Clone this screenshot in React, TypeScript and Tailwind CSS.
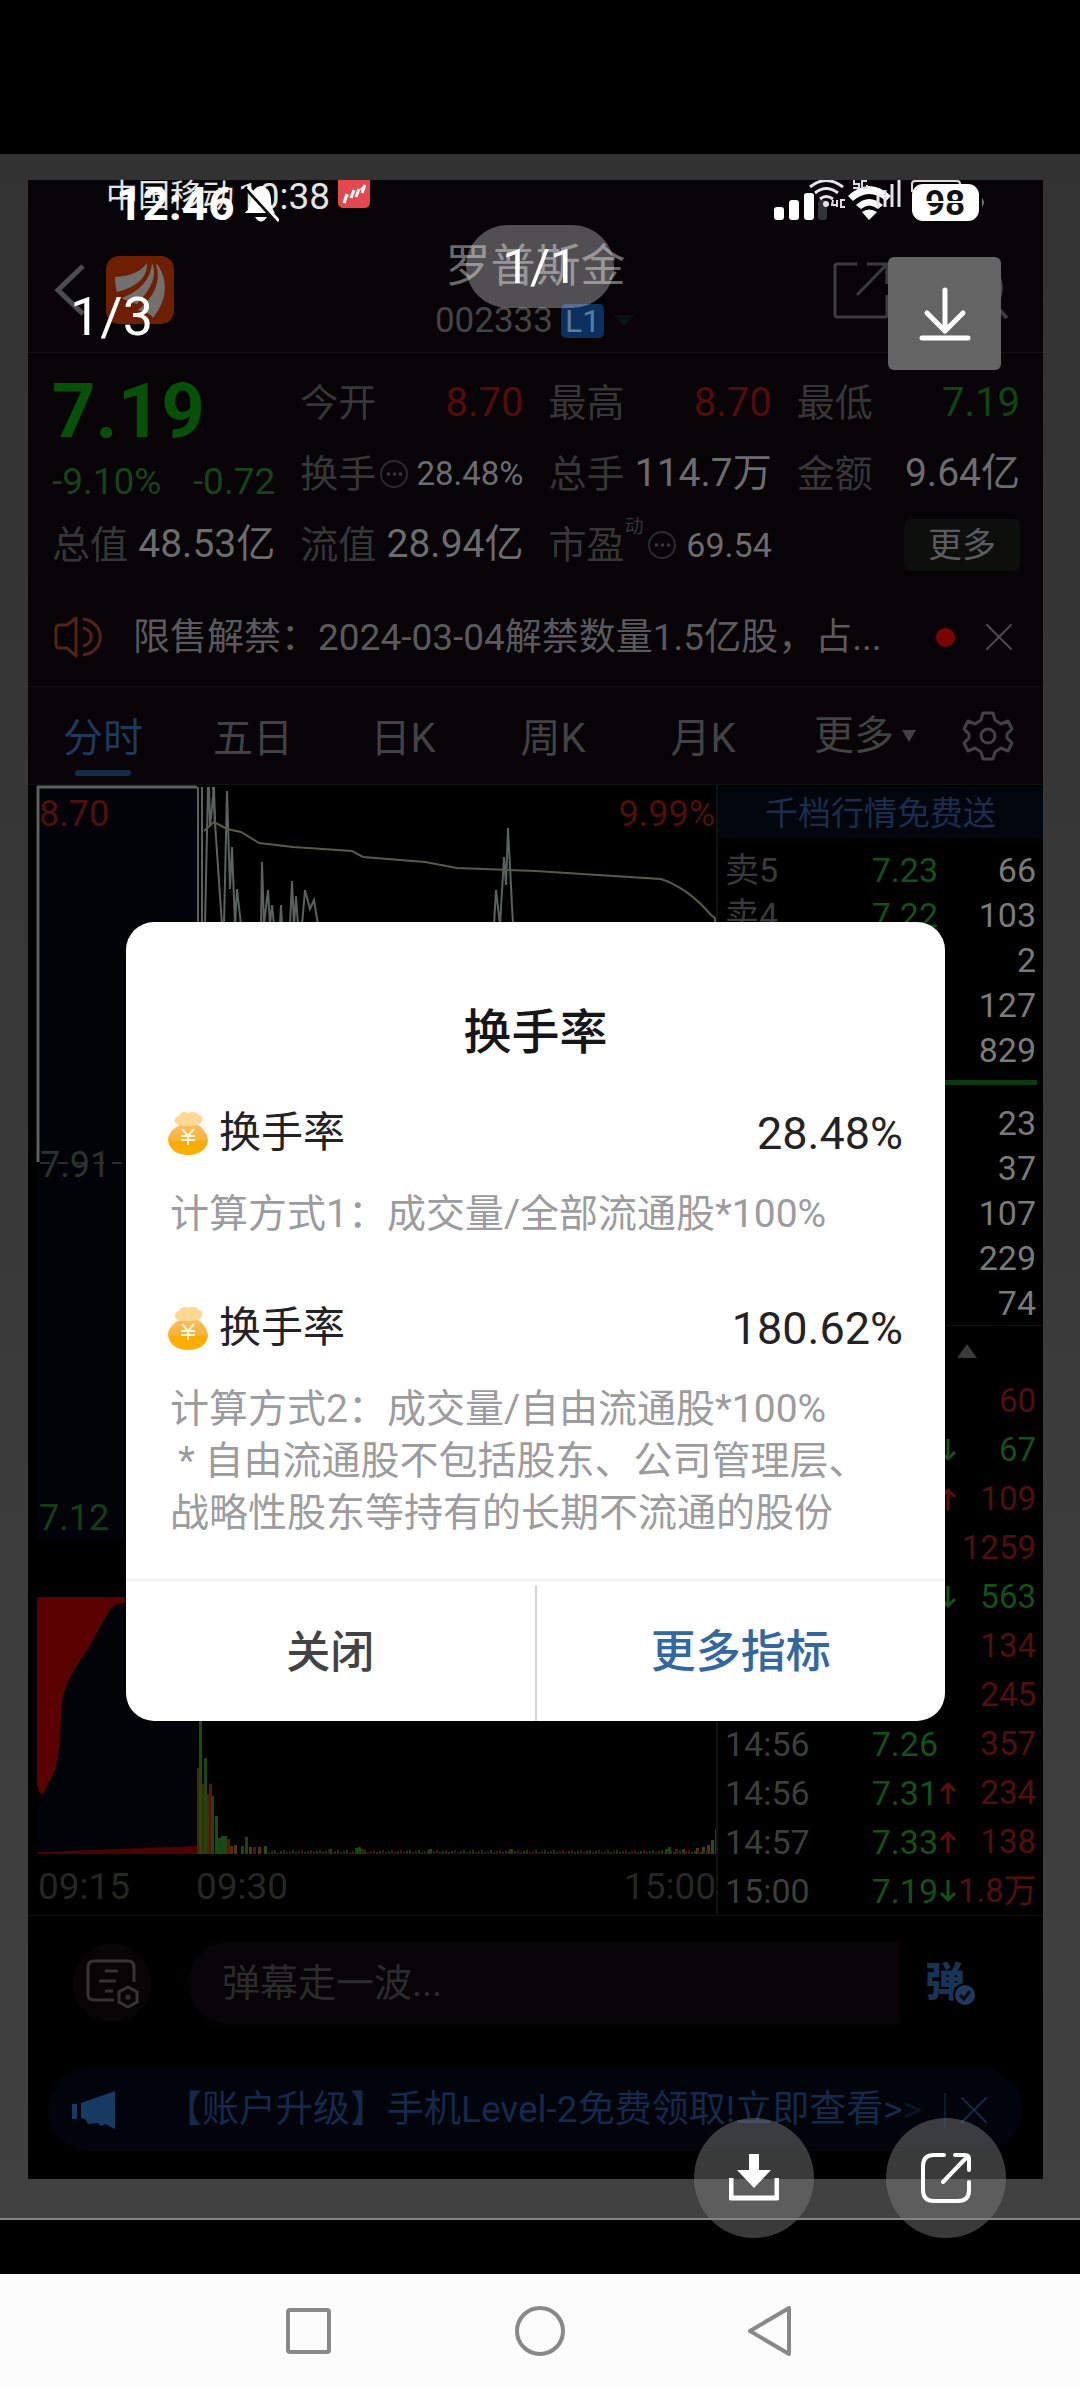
import { Settings2, X } from 'lucide-react';

const asks = [
  { label: '卖5', price: '7.23', volume: '66' },
  { label: '卖4', price: '7.22', volume: '103' },
  { label: '', price: '', volume: '2' },
  { label: '', price: '', volume: '127' },
  { label: '', price: '', volume: '829' },
];

const bids = [
  { label: '', price: '', volume: '23' },
  { label: '', price: '', volume: '37' },
  { label: '', price: '', volume: '107' },
  { label: '', price: '', volume: '229' },
  { label: '', price: '', volume: '74' },
];

const ticks = [
  { time: '', price: '', dir: '', volume: '60', up: true },
  { time: '', price: '', dir: 'down', volume: '67', up: false },
  { time: '', price: '', dir: 'up', volume: '109', up: true },
  { time: '', price: '', dir: '', volume: '1259', up: true },
  { time: '', price: '', dir: 'down', volume: '563', up: false },
  { time: '', price: '', dir: '', volume: '134', up: true },
  { time: '', price: '', dir: '', volume: '245', up: true },
  { time: '14:56', price: '7.26', dir: '', volume: '357', up: true },
  { time: '14:56', price: '7.31', dir: 'up', volume: '234', up: true },
  { time: '14:57', price: '7.33', dir: 'up', volume: '138', up: true },
  { time: '15:00', price: '7.19', dir: 'down', volume: '1.8万', up: true },
];

// [x, height, color]
const openingBars: [number, number, string][] = [
  [169, 86, '#4a2400'], [171, 134, '#1d4a16'], [174, 70, '#4a2400'], [176, 96, '#174a10'],
  [179, 60, '#5a2000'], [181, 70, '#5c1604'], [183, 58, '#174a10'], [187, 38, '#1d4a16'],
  [190, 16, '#174a10'], [193, 18, '#174a10'], [196, 18, '#174a10'], [199, 15, '#5c1604'],
  [202, 8, '#5c2a04'], [206, 9, '#4a3a10'], [213, 8, '#174a10'], [217, 17, '#174a10'],
  [221, 7, '#4a3a10'], [225, 7, '#5c1604'], [230, 7, '#5c2a04'], [236, 8, '#2d4a16'],
  [301, 5, '#174a10'], [327, 6, '#174a10'], [330, 7, '#174a10'], [333, 5, '#5c1604'],
  [401, 5, '#174a10'], [482, 5, '#174a10'], [637, 5, '#174a10'], [640, 7, '#174a10'],
  [647, 5, '#5c1604'], [654, 5, '#5c2a04'], [668, 6, '#4a3a10'], [674, 7, '#4a3a10'],
  [679, 9, '#4a3a10'], [683, 14, '#2d4a16'], [687, 25, '#174a10'],
];

const restBars = Array.from({ length: 148 }, (_, i) => ({
  x: 240 + i * 3,
  h: 2 + ((i * 7) % 3),
  fill: (i * 5) % 7 < 3 || i % 11 === 0 ? '#4a1404' : '#143a10',
}));

function MoreDots() {
  return (
    <svg className="h-7 w-7 shrink-0" viewBox="0 0 28 28" fill="none">
      <circle cx="14" cy="14" r="13" stroke="#2b2b2d" strokeWidth="2" />
      <path d="M7 14H10M13 14H16M19 14H22" stroke="#3a3a3c" strokeWidth="3" />
    </svg>
  );
}

function MoneyBag() {
  return (
    <svg className="h-11 w-10 shrink-0" viewBox="0 0 40 44">
      <defs>
        <linearGradient id="bag" x1="0" y1="0" x2="0" y2="1">
          <stop offset="0" stopColor="#ffbf66" />
          <stop offset="0.55" stopColor="#f9b23c" />
          <stop offset="0.6" stopColor="#fdab05" />
          <stop offset="1" stopColor="#ffb000" />
        </linearGradient>
      </defs>
      <path d="M12 14C20 9 28 9 30 14C36 18 40 24 40 30C38 40 30 44 20 44S1 39 0 29C0 23 5 17 12 14Z" fill="url(#bag)" />
      <path d="M10 14C5 12 6 5 11 5C12 1 17 0 20 2C24 0 30 1 30 4C35 4 36 9 32 13Q21 17 10 14Z" fill="#ffd993" />
      <path d="M14 18L20 25L26 18M20 25V34M13 25H27M13 29H27" stroke="#fff6df" strokeWidth="2" fill="none" />
    </svg>
  );
}

function Arrow({ dir }: { dir: string }) {
  if (!dir) return null;
  return (
    <svg className="h-6 w-5" viewBox="0 0 20 24" fill="none" stroke={dir === 'up' ? '#5c0e0e' : '#155019'} strokeWidth="3">
      {dir === 'up' ? <path d="M10 23V3M3 10L10 3L17 10" /> : <path d="M10 1V21M3 14L10 21L17 14" />}
    </svg>
  );
}

function StatusBar() {
  return (
    <div className="relative h-8">
      <div className="flex h-8 items-center pl-[78px] leading-none text-[#e4e4e4]">
        <span className="text-[32px]">中国移动</span>
        <span className="ml-1 text-[37px]">10:38</span>
        <svg className="mb-1 ml-2 h-7 w-8" viewBox="0 0 32 28">
          <path d="M0 0H32V22Q32 28 26 28H6Q0 28 0 22Z" fill="#e4484f" />
          <path d="M6 23L9 14M13 18L16 10M18 17L21 9M24 13L27 5M7 18L10 15M23 10L27 6" stroke="#fff" strokeWidth="3" />
        </svg>
      </div>

      <div className="absolute left-[88px] top-1 flex items-center gap-2 text-white">
        <span className="text-[46px] font-bold leading-10">12:46</span>
        <svg className="h-10 w-9" viewBox="0 0 36 40">
          <path d="M18 2C11 3 8 9 8 16Q8 23 2 29H32Q28 24 28 16C28 9 25 3 18 2ZM12 33Q18 42 24 33Z" fill="#fff" />
          <path d="M2 3L34 38" stroke="#080408" strokeWidth="4" />
          <path d="M5 3L36 37" stroke="#fff" strokeWidth="3" />
        </svg>
      </div>

      <svg className="absolute right-[57px] top-0 h-11 w-[212px]" viewBox="0 0 212 44" fill="none">
        <rect x="0" y="27" width="10" height="13" rx="3" fill="#fff" />
        <rect x="15" y="20" width="10" height="20" rx="3" fill="#fff" />
        <rect x="30" y="13" width="10" height="27" rx="3" fill="#fff" />
        <rect x="44" y="20" width="9" height="20" rx="3" fill="#333" />
        <path d="M36 7Q52 -6 69 7M41 13Q52 4 64 13M46 19Q52 14 59 19" stroke="#e4e4e4" strokeWidth="3" />
        <circle cx="52" cy="24" r="3" fill="#e4e4e4" />
        <path d="M74 16Q95 -4 117 16L112 21Q95 7 79 21Z" fill="#fff" />
        <path d="M82 25Q95 13 109 25L104 29Q95 22 87 29Z" fill="#fff" />
        <path d="M88 32Q95 27 103 32L95 40Z" fill="#fff" />
        <path d="M104 27V15M111 27V10M118 27V4M125 27V0" stroke="#e4e4e4" strokeWidth="3" />
        <path d="M80 0V4H85V8H79M93 1H88V8H93V5M59 20L58 25H64M63 20V27M71 20H67V27H71" stroke="#ddd" strokeWidth="2" />
        <path d="M138 12V4Q138 1 141 1H183Q186 1 186 4" stroke="#ddd" strokeWidth="2" />
        <rect x="138" y="4" width="67" height="37" rx="11" fill="#fff" />
        <path d="M208 18Q212 22 208 27Z" fill="#777" />
        <text x="171" y="35" textAnchor="middle" fontSize="35" fontWeight="700" fill="#111">98</text>
        <path d="M150 22H190" stroke="#fff" strokeWidth="2" />
      </svg>
    </div>
  );
}

function Header() {
  return (
    <header className="h-[173px] border-b border-[#121412]">
      <StatusBar />
      <div className="grid h-[140px] grid-cols-[1fr_auto_1fr] items-center">
        <div className="mt-4 flex items-center gap-5 pl-[26px]">
          <button aria-label="返回" className="h-[54px] w-8">
            <svg className="h-full w-full" viewBox="0 0 32 54" fill="none">
              <path d="M29 3L4 27L29 51" stroke="#4c4c4e" strokeWidth="5" />
            </svg>
          </button>
          <svg className="h-[68px] w-[68px]" viewBox="0 0 68 68">
            <rect width="68" height="68" rx="13" fill="#6e1f02" />
            <path d="M9 21Q32 20 41 7Q42 28 11 36Q9 30 9 21Z" fill="#72706e" />
            <path d="M16 42Q44 31 46 7Q54 24 31 48Q20 45 16 42Z" fill="#72706e" />
            <path d="M52 9Q68 35 47 62Q45 57 32 54Q58 33 50 8Z" fill="#72706e" />
          </svg>
        </div>

        <div className="mt-6 flex flex-col items-center">
          <h1 className="text-[45px] leading-[54px] text-[#6a6a6c]">罗普斯金</h1>
          <div className="flex items-center gap-2 text-[35px] leading-[54px] text-[#444446]">
            002333
            <span className="rounded-[5px] bg-[#0d2f5e] px-1 text-[32px] leading-[34px] text-[#5c7c9c]">L1</span>
            <svg className="h-3 w-6" viewBox="0 0 24 12">
              <path d="M2 0H22L12 12Z" fill="#061510" />
            </svg>
          </div>
        </div>

        <div className="mt-4 flex items-center justify-end gap-9 pr-[34px]">
          <button aria-label="分享" className="h-[58px] w-[58px]">
            <svg className="h-full w-full" viewBox="0 0 58 58" fill="none" stroke="#3c3c3e" strokeWidth="3">
              <path d="M24 3H4Q2 3 2 5V53Q2 56 4 56H52Q54 56 54 54V34M34 3H54V23M54 3L24 34" />
            </svg>
          </button>
          <button aria-label="搜索" className="h-[58px] w-[82px]">
            <svg className="h-full w-full" viewBox="0 0 82 58" fill="none" stroke="#3c3c3e" strokeWidth="4">
              <circle cx="49" cy="27" r="25" />
              <path d="M67 43L80 57" />
            </svg>
          </button>
        </div>
      </div>
    </header>
  );
}

function Quote() {
  const label = 'text-[38px] text-[#363638]';
  const value = 'text-[39px] text-[#6c6c6e]';
  return (
    <section className="pl-6 pr-[23px] pt-[14px] leading-none">
      <dl className="grid auto-rows-[71px] grid-cols-4 gap-x-[25px] whitespace-nowrap">
        <div className="row-span-2 flex flex-col justify-center pt-2 text-[#075007]">
          <dd className="text-[76px] font-bold leading-[80px]">7.19</dd>
          <dd className="flex justify-between text-[37px] leading-[62px] text-[#154418]">
            <span>-9.10%</span>
            <span>-0.72</span>
          </dd>
        </div>
        <div className="flex items-center justify-between">
          <dt className={label}>今开</dt>
          <dd className="text-[40px] text-[#540b0b]">8.70</dd>
        </div>
        <div className="flex items-center justify-between">
          <dt className={label}>最高</dt>
          <dd className="text-[40px] text-[#540b0b]">8.70</dd>
        </div>
        <div className="flex items-center justify-between">
          <dt className={label}>最低</dt>
          <dd className="text-[40px] text-[#0f4413]">7.19</dd>
        </div>
        <div className="flex items-center justify-between">
          <dt className="flex items-center gap-1 text-[38px] text-[#363638]">换手<MoreDots /></dt>
          <dd className="text-[33px] text-[#6c6c6e]">28.48%</dd>
        </div>
        <div className="flex items-center justify-between">
          <dt className={label}>总手</dt>
          <dd className={value}>114.7万</dd>
        </div>
        <div className="flex items-center justify-between">
          <dt className={label}>金额</dt>
          <dd className={value}>9.64亿</dd>
        </div>
        <div className="flex items-center justify-between">
          <dt className={label}>总值</dt>
          <dd className={value}>48.53亿</dd>
        </div>
        <div className="flex items-center justify-between">
          <dt className={label}>流值</dt>
          <dd className={value}>28.94亿</dd>
        </div>
        <div className="flex items-center justify-between">
          <dt className="flex items-center text-[38px] text-[#363638]">
            市盈<sup className="mb-4 mr-1 text-[19px]">动</sup><MoreDots />
          </dt>
          <dd className="text-[34px] text-[#6c6c6e]">69.54</dd>
        </div>
        <div className="flex items-center justify-end">
          <button className="h-[52px] w-[116px] rounded-md bg-[#0d0f0d] text-[34px] text-[#5c5c5e]">更多</button>
        </div>
      </dl>
    </section>
  );
}

function Notice() {
  return (
    <div className="mt-2 flex h-[99px] items-center border-b border-[#0f110f] pl-[26px] pr-5">
      <svg className="h-[42px] w-12" viewBox="0 0 48 42" fill="none" stroke="#532416" strokeWidth="3" strokeLinejoin="round">
        <path d="M22 2V40L13 32H6Q2 32 2 28V13Q2 9 6 9H13ZM29 3C52 6 52 36 29 39M29 12C40 14 40 28 29 30" />
      </svg>
      <p className="ml-[31px] whitespace-nowrap text-[37px] leading-none text-[#5a5a5c]">
        限售解禁：2024-03-04解禁数量1.5亿股，占...
      </p>
      <span className="ml-auto mr-5 h-[19px] w-[19px] rounded-full bg-[#7a0303]" />
      <button aria-label="关闭公告">
        <X className="h-12 w-12 text-[#4c4c4e]" strokeWidth={1} />
      </button>
    </div>
  );
}

function Tabs() {
  return (
    <nav className="flex h-[98px] items-center border-b border-[#0f110f] text-[40px] leading-none text-[#424244]">
      {['分时', '五日', '日K', '周K', '月K'].map((tab, i) => (
        <button key={tab} className="flex h-full w-[150px] flex-col items-center pt-8">
          <span className={i === 0 ? 'text-[#1d3a5e]' : ''}>{tab}</span>
          {i === 0 && <span className="mt-[11px] h-[6px] w-14 rounded-full bg-[#152b47]" />}
        </button>
      ))}
      <button className="ml-9 flex items-center gap-2 whitespace-nowrap">
        更多
        <svg className="h-3 w-[14px]" viewBox="0 0 14 12">
          <path d="M0 0H14L7 12Z" fill="#424244" />
        </svg>
      </button>
      <button aria-label="设置" className="ml-auto mr-7">
        <svg className="h-[54px] w-[54px]" viewBox="0 0 54 54" fill="none" stroke="#424244" strokeWidth="3" strokeLinejoin="round">
          <path d="M22 4H32L34 11L40 15L47 12L51 20L46 25V29L51 34L47 42L40 39L34 43L32 50H22L20 43L14 39L7 42L3 34L8 29V25L3 20L7 12L14 15L20 11Z" />
          <circle cx="27" cy="27" r="7" />
        </svg>
      </button>
    </nav>
  );
}

function MinuteChart() {
  return (
    <svg className="h-auto min-w-0 flex-1" viewBox="0 0 690 1129" fill="none">
      <rect x="10" y="1" width="159" height="754" fill="#010308" />
      <rect x="10" y="812" width="159" height="257" fill="#010308" />
      <g stroke="#5c605f" strokeWidth="2">
        <path d="M10 377V2H169" strokeWidth="3" />
        <path d="M170 2V140M174 2V140M180 2L177 140M181 2L182 42L186 2L187 38L194 140" />
        <path d="M185 2L187 38M196 140L199 6L202 104L204 62L207 140L209 104L213 140" />
        <path d="M233 140L234 77L236 140L240 105L242 140L244 120L246 140M252 140L253 120L254 140" />
        <path d="M262 140L264 96L266 140L268 111L270 140M274 140L277 105L282 124L286 115L290 140" />
        <path d="M466 140L468 105L472 140L476 72L478 100L480 43L485 140" />
      </g>
      <path
        d="M176 46L186 37L199 44L213 47L231 58L265 62L324 66L335 72L397 77L429 83L508 86L570 90L633 94Q660 103 683 130L687 133V140"
        stroke="#5a5a48"
        strokeWidth="2"
      />
      <path d="M12 378H690" stroke="#2a2c2c" strokeWidth="2" strokeDasharray="10 8" />
      <path d="M9 812H97V818Q84 818 79 829L72 842L58 867Q44 886 40 897Q33 912 33 930Q32 970 26 987L17 1005Q12 1014 9 999Z" fill="#5a0000" />
      <path d="M10 1067L169 1061V1069H10Z" fill="#4a0202" />
      {openingBars.map(([x, h, fill]) => (
        <rect key={x} x={x} y={1069 - h} width="3" height={h} fill={fill} />
      ))}
      {restBars.map((bar) => (
        <rect key={bar.x} x={bar.x} y={1069 - bar.h} width="2" height={bar.h} fill={bar.fill} />
      ))}
      <path d="M689 0V1129" stroke="#101410" strokeWidth="2" />
      <g fontSize="36">
        <text x="11" y="41" fill="#520e0e">8.70</text>
        <text x="687" y="41" textAnchor="end" fill="#520e0e">9.99%</text>
        <text x="12" y="392" fill="#2e3030">7.91</text>
        <text x="11" y="745" fill="#124015">7.12</text>
      </g>
      <g fontSize="37" fill="#242724">
        <text x="10" y="1114">09:15</text>
        <text x="168" y="1114">09:30</text>
        <text x="688" y="1114" textAnchor="end">15:00</text>
      </g>
    </svg>
  );
}

function BookTable({ rows }: { rows: typeof asks }) {
  return (
    <table className="w-full table-fixed">
      <tbody>
        {rows.map((row) => (
          <tr key={row.volume} className="h-[45px]">
            <td className="w-[140px] pl-[7px] text-[#3a3a3a]">{row.label}</td>
            <td className="w-20 text-right text-[#155019]">{row.price}</td>
            <td className="pr-[7px] text-right text-[#7a7a7a]">{row.volume}</td>
          </tr>
        ))}
      </tbody>
    </table>
  );
}

function OrderBook() {
  return (
    <aside className="w-[325px] shrink-0 whitespace-nowrap pt-[2px] text-[34px] leading-none">
      <a href="#level2" className="mb-2 flex h-[52px] items-center justify-center bg-[#01060d] text-[33px] text-[#1b2d4c]">
        千档行情免费送
      </a>
      <BookTable rows={asks} />
      <div className="mb-[15px] mr-[6px] mt-2 h-[5px] bg-[#0e3a0e]" />
      <BookTable rows={bids} />
      <button aria-label="展开明细" className="flex h-[51px] w-full items-center justify-end border-t border-[#0f140f] pr-[66px]">
        <svg className="h-[14px] w-5" viewBox="0 0 20 14">
          <path d="M0 14L10 0L20 14Z" fill="#3a3a3a" />
        </svg>
      </button>
      <table className="w-full table-fixed">
        <tbody>
          {ticks.map((tick) => (
            <tr key={tick.volume} className="h-[49px]">
              <td className="w-[140px] pl-[7px] text-[#3c3e3c]">{tick.time}</td>
              <td className="w-20 text-right text-[#155019]">{tick.price}</td>
              <td className="w-5"><Arrow dir={tick.dir} /></td>
              <td className={tick.up ? 'pr-[7px] text-right text-[33px] text-[#520e0e]' : 'pr-[7px] text-right text-[33px] text-[#155019]'}>
                {tick.volume}
              </td>
            </tr>
          ))}
        </tbody>
      </table>
    </aside>
  );
}

function CommentBar() {
  return (
    <div className="flex items-center pb-11 pl-11 pr-[66px] pt-[26px]">
      <button aria-label="弹幕设置" className="flex h-20 w-20 shrink-0 items-center justify-center rounded-full bg-[#060404]">
        <svg className="h-[50px] w-[54px]" viewBox="0 0 54 50" fill="none" stroke="#343436" strokeWidth="3">
          <path d="M29 42H9Q3 42 3 36V9Q3 3 9 3H43Q49 3 49 9V24M20 13H33M14 23H31M20 33H28" />
          <path d="M43 29L52 34V44L43 49L34 44V34Z" />
          <circle cx="43" cy="39" r="1" />
        </svg>
      </button>
      <input
        aria-label="发送弹幕"
        placeholder="弹幕走一波..."
        className="ml-9 h-[82px] min-w-0 flex-1 rounded-l-full rounded-r-lg bg-[#070306] pl-[34px] text-[38px] leading-none outline-none placeholder:text-[#2b2b2d]"
      />
      <button className="relative ml-[25px] mr-3 text-[40px] font-black leading-[48px] text-[#173457]">
        弹
        <svg className="absolute -right-3 bottom-0 h-6 w-6" viewBox="0 0 24 24" fill="none">
          <circle cx="12" cy="12" r="11" fill="#1f3a5c" stroke="#000" strokeWidth="2" />
          <path d="M7 12L11 16L17 8" stroke="#050a12" strokeWidth="3" />
        </svg>
      </button>
    </div>
  );
}

function PromoBar() {
  return (
    <div className="ml-5 mr-[21px] flex h-[83px] items-center rounded-full bg-[#01040a] pl-6 pr-6 text-[#15294a]">
      <svg className="h-10 w-11 shrink-0" viewBox="0 0 44 40">
        <path d="M0 14H5V29H0ZM9 13L43 1V39L33 34Q29 38 26 33L16 34L14 30L9 28Z" fill="#173a63" />
      </svg>
      <a href="#upgrade" className="ml-[49px] whitespace-nowrap text-[37px] leading-none">
        【账户升级】手机Level-2免费领取!立即查看&gt;<span className="text-[#0a1424]">&gt;</span>
      </a>
      <span className="ml-auto h-[34px] w-[2px] bg-[#101a26]" />
      <button aria-label="关闭推广" className="ml-1">
        <X className="h-12 w-12" strokeWidth={1} />
      </button>
    </div>
  );
}

function TurnoverItem({ value, children }: { value: string; children: React.ReactNode }) {
  return (
    <div>
      <div className="flex h-[60px] items-center">
        <MoneyBag />
        <h3 className="ml-[11px] text-[42px] leading-none">换手率</h3>
        <span className="ml-auto text-[45px] leading-none">{value}</span>
      </div>
      <div className="mt-[25px] whitespace-nowrap pl-[2px] text-[39px] leading-[52px] text-[#9c9c9f]">{children}</div>
    </div>
  );
}

function TurnoverDialog() {
  return (
    <div
      role="dialog"
      aria-label="换手率"
      className="absolute left-[126px] right-[135px] top-[768px] overflow-hidden rounded-[28px] bg-white text-[#232325]"
    >
      <div className="px-[42px] pt-[77px]">
        <h2 className="text-center text-[48px] font-medium leading-[68px] text-[#161618]">换手率</h2>
        <div className="mt-9 flex flex-col gap-[58px]">
          <TurnoverItem value="28.48%">
            <p>计算方式1：成交量/全部流通股*100%</p>
          </TurnoverItem>
          <TurnoverItem value="180.62%">
            <p>计算方式2：成交量/自由流通股*100%</p>
            <p className="pl-2">* 自由流通股不包括股东、公司管理层、</p>
            <p>战略性股东等持有的长期不流通的股份</p>
          </TurnoverItem>
        </div>
      </div>
      <div className="mt-10 flex h-[142px] border-t-2 border-[#f3f0f2] pt-1">
        <button className="flex-1 text-[44px] font-medium text-[#434345]">关闭</button>
        <button className="flex-1 border-l-2 border-[#d5d5d7] text-[45px] font-medium text-[#33689f]">更多指标</button>
      </div>
    </div>
  );
}

export default function App() {
  return (
    <div className="flex min-h-screen flex-col bg-black pt-[154px] font-['Roboto','Noto_Sans_CJK_SC',sans-serif]" lang="zh-CN">
      <main className="relative">
        <div className="border-b-2 border-[#858585] bg-linear-to-b from-[#323232] via-[#383938] to-[#414141] pb-[39px] pl-7 pr-[37px] pt-[26px]">
          <div className="bg-black pb-7">
            <div className="bg-[#070306]">
              <Header />
              <Quote />
              <Notice />
              <Tabs />
            </div>
            <div className="flex items-start border-b border-[#0c120e]">
              <MinuteChart />
              <OrderBook />
            </div>
            <CommentBar />
            <PromoBar />
          </div>
        </div>

        {/* viewer controls */}
        <span className="absolute left-[70px] top-[136px] text-[54px] leading-[54px] text-white">1/3</span>
        <span className="absolute left-1/2 top-[71px] flex h-[83px] w-[148px] -translate-x-1/2 items-center justify-center rounded-full bg-white/30 text-[49px] leading-none text-white">
          1/1
        </span>
        <button aria-label="下载" className="absolute right-[79px] top-[103px] flex h-[113px] w-[113px] items-center justify-center rounded-md bg-[#646464]">
          <svg className="h-[54px] w-[54px]" viewBox="0 0 54 54" fill="none" stroke="#fff" strokeWidth="5" strokeLinecap="round" strokeLinejoin="round">
            <path d="M27 3V43M9 26L27 44L45 26M4 51H50" />
          </svg>
        </button>

        <TurnoverDialog />

        <div className="absolute -bottom-[18px] right-[74px] flex gap-[72px]">
          <button aria-label="保存图片" className="flex h-[120px] w-[120px] items-center justify-center rounded-full bg-[#808083]/45">
            <svg className="h-[48px] w-[50px]" viewBox="0 0 50 48" fill="none">
              <path d="M20 0H30V16H42L25 34L8 16H20Z" fill="#fff" />
              <path d="M2 24V44H48V24" stroke="#fff" strokeWidth="5" strokeLinejoin="round" />
            </svg>
          </button>
          <button aria-label="打开原图" className="flex h-[120px] w-[120px] items-center justify-center rounded-full bg-[#808083]/45">
            <svg className="h-[52px] w-[52px]" viewBox="0 0 52 52" fill="none" stroke="#fff" strokeWidth="4" strokeLinecap="round" strokeLinejoin="round">
              <path d="M24 3H14Q3 3 3 14V38Q3 49 14 49H38Q49 49 49 38V30M35 3H45Q49 3 49 7V18M47 5L23 30" />
            </svg>
          </button>
        </div>
      </main>

      <nav className="mt-auto flex h-[114px] items-center justify-center gap-[181px] bg-[#fcfcfc]">
        <button aria-label="最近任务" className="h-[50px] w-[50px]">
          <svg viewBox="0 0 50 50" fill="none" stroke="#888" strokeWidth="4">
            <rect x="4" y="4" width="41" height="42" rx="2" />
          </svg>
        </button>
        <button aria-label="主页" className="h-[50px] w-[50px]">
          <svg viewBox="0 0 50 50" fill="none" stroke="#888" strokeWidth="4">
            <circle cx="25" cy="25" r="23" />
          </svg>
        </button>
        <button aria-label="后退" className="h-[50px] w-[50px]">
          <svg viewBox="0 0 50 50" fill="none" stroke="#888" strokeWidth="4" strokeLinejoin="round">
            <path d="M4 25L43 2V48Z" />
          </svg>
        </button>
      </nav>
    </div>
  );
}
